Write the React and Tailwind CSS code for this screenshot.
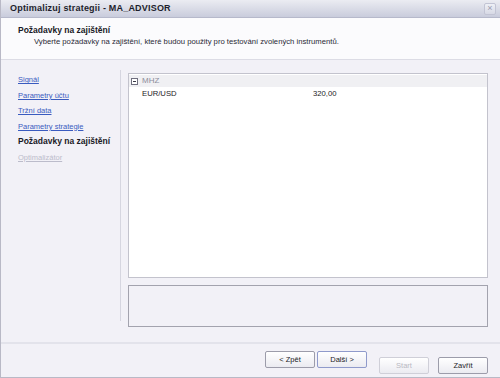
import React from "react";

const navItems = [
  { label: "Signál", state: "link" },
  { label: "Parametry účtu", state: "link" },
  { label: "Tržní data", state: "link" },
  { label: "Parametry strategie", state: "link" },
  { label: "Požadavky na zajištění", state: "active" },
  { label: "Optimalizátor", state: "disabled" },
];

const WizardButton = ({ children, primary, disabled }) => (
  <button
    className={
      "w-[50px] h-[17px] rounded-[2px] border text-[7.5px] leading-none bg-gradient-to-b from-white to-[#ebebf1] " +
      (disabled
        ? "border-[#cfcfd8] text-[#b9b9c3]"
        : primary
        ? "border-[#8f9acb] text-[#1c1c28]"
        : "border-[#9c9caa] text-[#1c1c28]")
    }
  >
    {children}
  </button>
);

export default function App() {
  return (
    <div
      className="w-[500px] h-[378px] flex flex-col bg-[#f2f1f7] border-l border-b border-[#b9b9c6] overflow-hidden"
      style={{ fontFamily: '"Liberation Sans", Arial, sans-serif' }}
    >
      {/* Title bar */}
      <div className="h-[18px] flex items-center justify-between pl-[9px] pr-[4px] bg-gradient-to-b from-[#ebecf2] to-[#c9ccdc] border-b border-[#b6b9cb]">
        <span className="text-[9px] font-bold text-[#1d1e2c] tracking-[0.2px]">
          Optimalizuj strategii - MA_ADVISOR
        </span>
        <div className="w-[12px] h-[12px] rounded-[2px] border border-[#c2c4d4] bg-gradient-to-b from-[#eef0f6] to-[#d7d9e5] flex items-center justify-center text-[9px] leading-none text-[#9a9cae]">
          ×
        </div>
      </div>

      {/* Header */}
      <div className="h-[42px] bg-[#fbfbfd] border-b border-[#dcdce5] pl-[17px] pt-[7px]">
        <div className="text-[8.5px] font-bold text-[#1a1a26] leading-[11px]">
          Požadavky na zajištění
        </div>
        <div className="pl-[16px] text-[7.7px] text-[#2a2a36] leading-[11px]">
          Vyberte požadavky na zajištění, které budou použity pro testování zvolených instrumentů.
        </div>
      </div>

      {/* Body */}
      <div className="flex-1 flex">
        <div className="w-[120px] pt-[10px] pb-[21px]">
          <div className="h-full border-r border-[#d6d6e0] pl-[17px] pt-[2px] flex flex-col">
            {navItems.map((item) => (
              <div
                key={item.label}
                className={
                  "h-[15.5px] flex items-center " +
                  (item.state === "active"
                    ? "text-[8.5px] font-bold text-[#1a1a26]"
                    : item.state === "disabled"
                    ? "text-[7.5px] text-[#bcbccb] underline"
                    : "text-[7.5px] text-[#3a5bbf] underline")
                }
              >
                {item.label}
              </div>
            ))}
          </div>
        </div>

        <div className="flex-1 pl-[7px] pr-[12px] pt-[13px] flex flex-col">
          <div className="h-[205px] bg-white border border-[#c3c3cd] pt-[1px]">
            <div className="h-[12px] bg-[#f0f0f3] flex items-center pl-[2px] text-[8px] text-[#8d8d9c]">
              <span className="w-[7px] h-[7px] border border-[#6f6f7e] flex items-center justify-center mr-[4px] bg-white">
                <span className="w-[3px] h-px bg-[#3a3a46]" />
              </span>
              MHZ
            </div>
            <div className="h-[13px] flex items-center text-[7.7px] text-[#1a1a26]">
              <span className="pl-[13px] w-[184px]">EUR/USD</span>
              <span>320,00</span>
            </div>
          </div>
          <div className="mt-[7px] h-[42px] border border-[#a3a3ae] bg-[#f2f1f7]" />
        </div>
      </div>

      {/* Footer */}
      <div className="h-[35px] border-t-2 border-[#e3e3eb] flex items-start pt-[7px] pr-[12px] justify-end">
        <div className="flex gap-[2px]">
          <WizardButton>&lt; Zpět</WizardButton>
          <WizardButton primary>Další &gt;</WizardButton>
        </div>
        <div className="ml-[12px]">
          <WizardButton disabled>Start</WizardButton>
        </div>
        <div className="ml-[9px]">
          <WizardButton>Zavřít</WizardButton>
        </div>
      </div>
    </div>
  );
}
